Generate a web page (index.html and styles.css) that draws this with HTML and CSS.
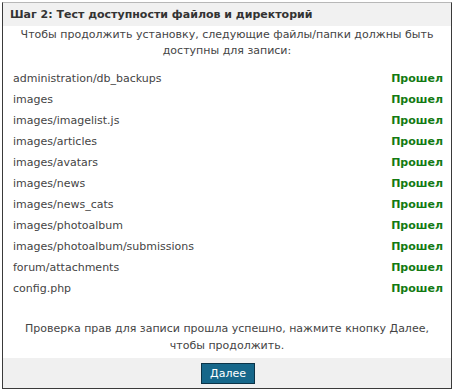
FILE: index.html
```html
<!DOCTYPE html>
<html>
<head>
<meta charset="utf-8">
<link rel="stylesheet" href="styles.css">
</head>
<body>
<div class="panel">
  <div class="hd">Шаг 2: Тест доступности файлов и директорий</div>
  <div class="intro">Чтобы продолжить установку, следующие файлы/папки должны быть<br>доступны для записи:</div>
  <div class="list">
    <div class="row"><span>administration/db_backups</span><span class="ok">Прошел</span></div>
    <div class="row"><span>images</span><span class="ok">Прошел</span></div>
    <div class="row"><span>images/imagelist.js</span><span class="ok">Прошел</span></div>
    <div class="row"><span>images/articles</span><span class="ok">Прошел</span></div>
    <div class="row"><span>images/avatars</span><span class="ok">Прошел</span></div>
    <div class="row"><span>images/news</span><span class="ok">Прошел</span></div>
    <div class="row"><span>images/news_cats</span><span class="ok">Прошел</span></div>
    <div class="row"><span>images/photoalbum</span><span class="ok">Прошел</span></div>
    <div class="row"><span>images/photoalbum/submissions</span><span class="ok">Прошел</span></div>
    <div class="row"><span>forum/attachments</span><span class="ok">Прошел</span></div>
    <div class="row"><span>config.php</span><span class="ok">Прошел</span></div>
  </div>
  <div class="note">Проверка прав для записи прошла успешно, нажмите кнопку Далее,<br>чтобы продолжить.</div>
  <div class="ft"><button class="btn">Далее</button></div>
</div>
</body>
</html>
```
FILE: styles.css
```css
html, body { margin: 0; padding: 0; background: #fff; }
body { padding: 2px; font-family: "DejaVu Sans", Verdana, sans-serif; font-size: 11px; color: #444; }
.panel {
  width: 450px; height: 387px; box-sizing: border-box;
  border: 1px solid #3a3a3a; border-top-color: #b8b8b8;
  display: flex; flex-direction: column; background: #fff;
}
.hd {
  height: 23px; line-height: 23px; background: #f1f1f1;
  padding-left: 7px; font-weight: bold; color: #333;
}
.intro { text-align: center; line-height: 16px; padding-top: 1px; color: #444; }
.list { padding: 9px 8px 0 10px; }
.row { display: flex; justify-content: space-between; height: 21px; line-height: 21px; }
.ok { font-weight: bold; color: #137a13; }
.note { text-align: center; line-height: 17px; margin-top: 21px; color: #444; }
.ft {
  margin-top: auto; height: 30px; background: #f0f0f0;
  display: flex; justify-content: center; align-items: center;
}
.btn {
  font-family: "DejaVu Sans", Verdana, sans-serif; font-size: 11px; color: #fff;
  background: #16678a; border: 1px solid #0b3347; width: 54px; height: 21px;
  padding: 0; margin: 0 0 0 2px; line-height: 19px;
}
```
